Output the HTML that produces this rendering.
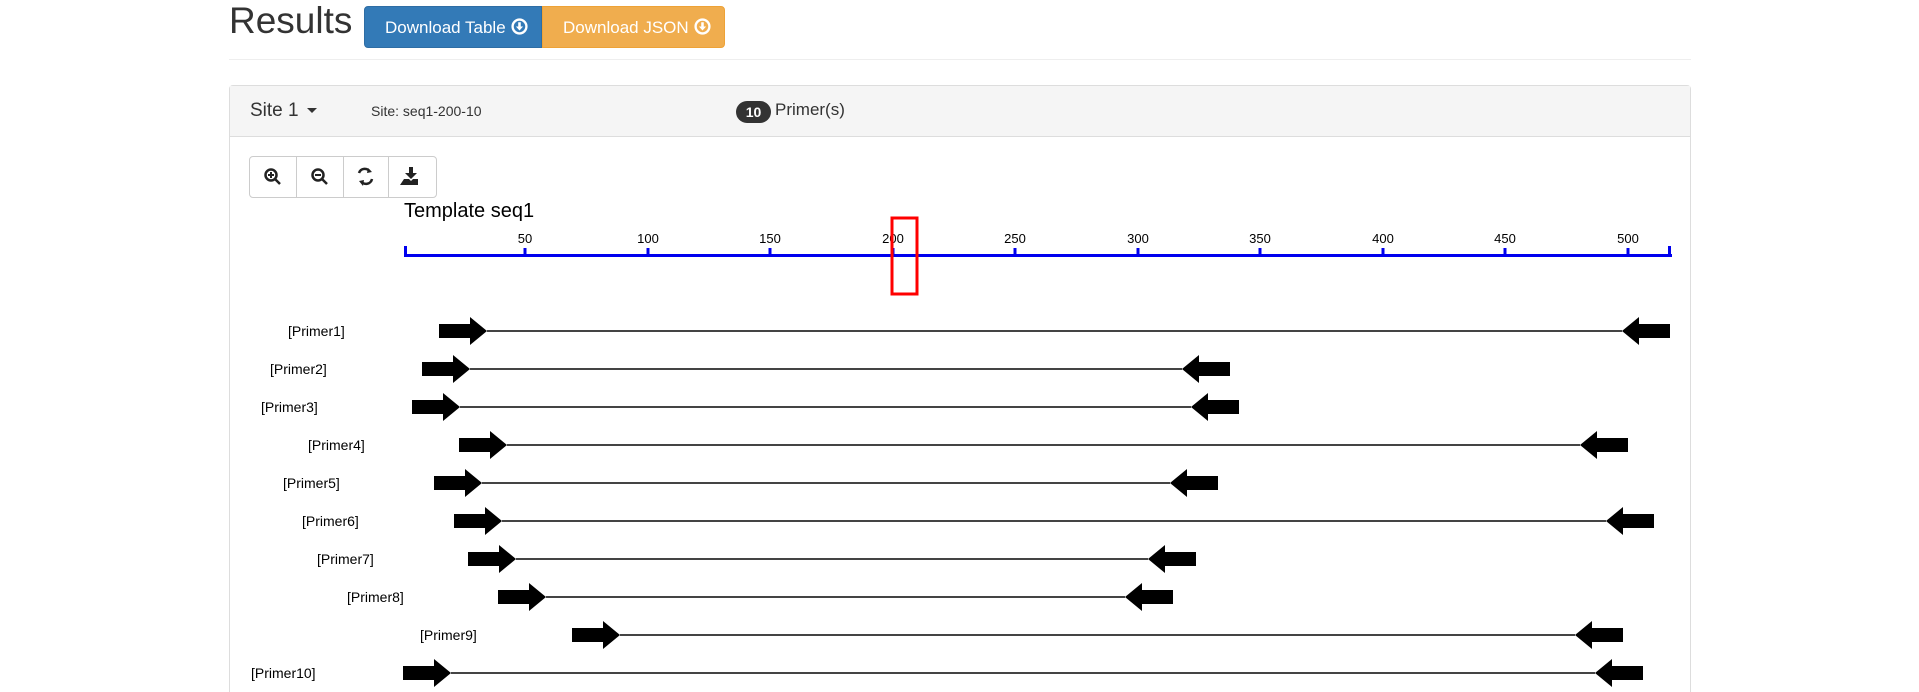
<!DOCTYPE html>
<html style="width:1919px;height:692px;overflow:hidden"><head><meta charset="utf-8"><style>
*{box-sizing:border-box;margin:0;padding:0}
body{width:1919px;height:692px;overflow:hidden;background:#fff;font-family:"Liberation Sans",Arial,sans-serif;color:#333;position:relative}
.abs{position:absolute}
h1{position:absolute;left:229px;top:0;font-size:37px;font-weight:400;line-height:42px;color:#333}
.btn{position:absolute;top:6px;height:42px;color:#fff;font-size:17px;line-height:42px;padding-left:20px;white-space:nowrap}
.circ{display:inline-block;width:17px;height:17px;vertical-align:-2px;margin-left:5px}
.hr{position:absolute;left:229px;width:1462px;top:59px;border-top:1px solid #eee}
.panel{position:absolute;left:229px;top:85px;width:1462px;height:607px;border:1px solid #ddd;border-bottom:none;border-radius:4px 4px 0 0}
.ph{height:51px;background:#f5f5f5;border-bottom:1px solid #ddd;position:relative}
.tb{position:absolute;left:249px;top:156px;width:188px;height:42px;border:1px solid #ccc;border-radius:4px}
.tb div{position:absolute;top:0;bottom:0;border-left:1px solid #ccc}
</style></head><body>
<h1>Results</h1>
<div class="btn" style="left:364px;width:178px;background:#337ab7;border-radius:4px 0 0 4px;border:1px solid #2e6da4">Download Table<svg class="circ" viewBox="0 0 16 16"><circle cx="8" cy="8" r="6.5" fill="none" stroke="#fff" stroke-width="2.2"/><path d="M6.8 4h2.4v4h2.2L8 11.8 4.6 8h2.2z" fill="#fff"/></svg></div>
<div class="btn" style="left:542px;width:183px;background:#f0ad4e;border-radius:0 4px 4px 0;border:1px solid #eea236">Download JSON<svg class="circ" viewBox="0 0 16 16"><circle cx="8" cy="8" r="6.5" fill="none" stroke="#fff" stroke-width="2.2"/><path d="M6.8 4h2.4v4h2.2L8 11.8 4.6 8h2.2z" fill="#fff"/></svg></div>
<div class="hr"></div>
<div class="panel"><div class="ph">
<span class="abs" style="left:20px;top:14px;font-size:19px">Site 1 <span style="display:inline-block;border-left:5px solid transparent;border-right:5px solid transparent;border-top:5px solid #333;vertical-align:3px;margin-left:3px"></span></span>
<span class="abs" style="left:141px;top:17px;font-size:14px">Site: seq1-200-10</span>
<span class="abs" style="left:506px;top:15px;width:35px;height:22px;border-radius:11px;background:#333;color:#fff;font-size:14px;font-weight:bold;text-align:center;line-height:22px">10</span>
<span class="abs" style="left:545px;top:14px;font-size:17px">Primer(s)</span>
</div></div>
<div class="tb"><div style="left:46px"></div><div style="left:93px"></div><div style="left:138px"></div></div>
<svg class="abs" style="left:0;top:0" width="1919" height="692">
<g fill="none" stroke="#222" stroke-width="2.5">
<circle cx="271" cy="175" r="5.5"/><line x1="275" y1="179" x2="280" y2="184"/><line x1="268" y1="175" x2="274" y2="175" stroke-width="2"/><line x1="271" y1="172" x2="271" y2="178" stroke-width="2"/>
<circle cx="318" cy="175" r="5.5"/><line x1="322" y1="179" x2="327" y2="184"/><line x1="315" y1="175" x2="321" y2="175" stroke-width="2"/>
<path d="M359 173 A6 6 0 0 1 370 172 M372 179 A6 6 0 0 1 361 181"/>
</g>
<path d="M368 168 L372 172 L367 173Z M363 186 L359 181 L364 180Z" fill="#222"/>
<path d="M409 167h4v6h4l-6 6l-6-6h4z M404 179h5l2 2l2-2h5v6h-18z" fill="#222"/>
<text x="404" y="217" font-size="20" fill="#000">Template seq1</text>
<g fill="#0000ee">
<rect x="404" y="254" width="1268" height="3"/>
<rect x="404" y="246" width="3" height="11"/><rect x="1668" y="246" width="3" height="11"/>
</g>
<g stroke="#0000ee" stroke-width="3">
<line x1="525" y1="248" x2="525" y2="256"/><line x1="648" y1="248" x2="648" y2="256"/><line x1="770" y1="248" x2="770" y2="256"/><line x1="893" y1="248" x2="893" y2="256"/><line x1="1015" y1="248" x2="1015" y2="256"/><line x1="1138" y1="248" x2="1138" y2="256"/><line x1="1260" y1="248" x2="1260" y2="256"/><line x1="1383" y1="248" x2="1383" y2="256"/><line x1="1505" y1="248" x2="1505" y2="256"/><line x1="1628" y1="248" x2="1628" y2="256"/>
</g>
<g font-size="13" fill="#000" text-anchor="middle">
<text x="525" y="243">50</text><text x="648" y="243">100</text><text x="770" y="243">150</text><text x="893" y="243">200</text><text x="1015" y="243">250</text><text x="1138" y="243">300</text><text x="1260" y="243">350</text><text x="1383" y="243">400</text><text x="1505" y="243">450</text><text x="1628" y="243">500</text>
</g>
<rect x="892" y="218" width="25" height="76" fill="none" stroke="#f00" stroke-width="3"/>
<g id="rows" font-size="14" fill="#000"></g>
</svg>
<script>
var rows=[[288,439,1670,331],[270,422,1230,369],[261,412,1239,407],[308,459,1628,445],[283,434,1218,483],[302,454,1654,521],[317,468,1196,559],[347,498,1173,597],[420,572,1623,635],[251,403,1643,673]];
var g=document.getElementById('rows'),h='';
rows.forEach(function(r,i){var L=r[0],a=r[1],b=r[2],y=r[3];var ta=a+48,tb=b-48;
h+='<text x="'+L+'" y="'+(y+5)+'">[Primer'+(i+1)+']</text>';
h+='<line x1="'+ta+'" y1="'+y+'" x2="'+tb+'" y2="'+y+'" stroke="#444" stroke-width="2"/>';
h+='<path d="M'+a+' '+(y-7)+'H'+(a+31)+'V'+(y-14)+'L'+ta+' '+y+'L'+(a+31)+' '+(y+14)+'V'+(y+7)+'H'+a+'Z"/>';
h+='<path d="M'+b+' '+(y-7)+'H'+(b-31)+'V'+(y-14)+'L'+tb+' '+y+'L'+(b-31)+' '+(y+14)+'V'+(y+7)+'H'+b+'Z"/>';});
g.innerHTML=h;
</script>
</body></html>
